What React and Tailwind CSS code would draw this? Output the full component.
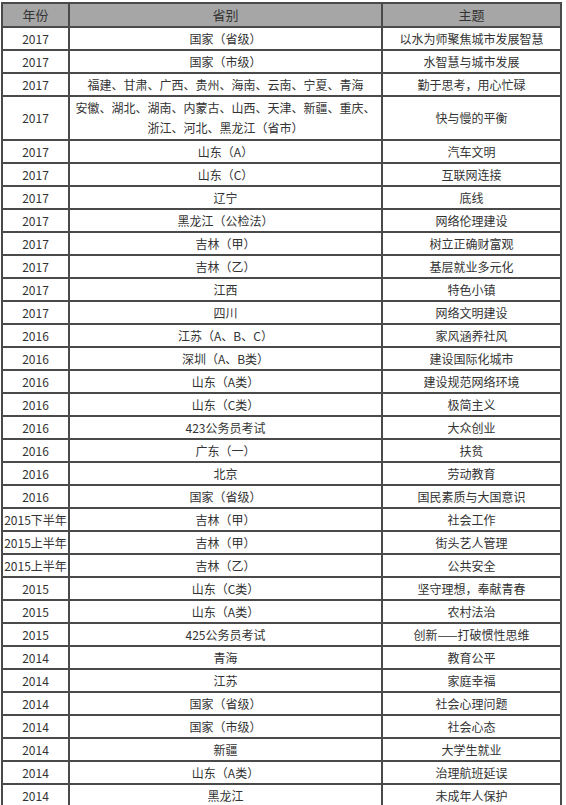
const rows = [
  ['2017', '国家（省级）', '以水为师聚焦城市发展智慧'],
  ['2017', '国家（市级）', '水智慧与城市发展'],
  ['2017', '福建、甘肃、广西、贵州、海南、云南、宁夏、青海', '勤于思考，用心忙碌'],
  ['2017', ['安徽、湖北、湖南、内蒙古、山西、天津、新疆、重庆、', '浙江、河北、黑龙江（省市）'], '快与慢的平衡'],
  ['2017', '山东（A）', '汽车文明'],
  ['2017', '山东（C）', '互联网连接'],
  ['2017', '辽宁', '底线'],
  ['2017', '黑龙江（公检法）', '网络伦理建设'],
  ['2017', '吉林（甲）', '树立正确财富观'],
  ['2017', '吉林（乙）', '基层就业多元化'],
  ['2017', '江西', '特色小镇'],
  ['2017', '四川', '网络文明建设'],
  ['2016', '江苏（A、B、C）', '家风涵养社风'],
  ['2016', '深圳（A、B类）', '建设国际化城市'],
  ['2016', '山东（A类）', '建设规范网络环境'],
  ['2016', '山东（C类）', '极简主义'],
  ['2016', '423公务员考试', '大众创业'],
  ['2016', '广东（一）', '扶贫'],
  ['2016', '北京', '劳动教育'],
  ['2016', '国家（省级）', '国民素质与大国意识'],
  ['2015下半年', '吉林（甲）', '社会工作'],
  ['2015上半年', '吉林（甲）', '街头艺人管理'],
  ['2015上半年', '吉林（乙）', '公共安全'],
  ['2015', '山东（C类）', '坚守理想，奉献青春'],
  ['2015', '山东（A类）', '农村法治'],
  ['2015', '425公务员考试', '创新——打破惯性思维'],
  ['2014', '青海', '教育公平'],
  ['2014', '江苏', '家庭幸福'],
  ['2014', '国家（省级）', '社会心理问题'],
  ['2014', '国家（市级）', '社会心态'],
  ['2014', '新疆', '大学生就业'],
  ['2014', '山东（A类）', '治理航班延误'],
  ['2014', '黑龙江', '未成年人保护'],
];

export default function App() {
  return (
    <div className="w-[566px] h-[805px] overflow-hidden bg-white pt-[2px] pl-[1px] text-[12px] text-[#333]" style={{ fontFamily: '"Noto Sans CJK SC", "Liberation Sans", sans-serif' }}>
      <div className="w-[561px] border-t-2 border-l-2 border-[#4a4a4a]">
        {/* header */}
        <div className="grid grid-cols-[67px_313px_179px] bg-[#a6a6a6] text-[13px] text-[#333]">
          <div className="h-[24px] flex items-center justify-center border-r-2 border-b-2 border-[#4a4a4a]">年份</div>
          <div className="h-[24px] flex items-center justify-center border-r-2 border-b-2 border-[#4a4a4a]">省别</div>
          <div className="h-[24px] flex items-center justify-center border-r-2 border-b-2 border-[#4a4a4a]">主题</div>
        </div>
        {rows.map((r, i) => {
          const multi = Array.isArray(r[1]);
          const h = multi ? 'h-[44px]' : 'h-[23px]';
          return (
            <div key={i} className="grid grid-cols-[67px_313px_179px]">
              <div className={`${h} flex items-center justify-center whitespace-nowrap border-r-2 border-b-2 border-[#4a4a4a]`}>{r[0]}</div>
              <div className={`${h} flex flex-col items-center justify-center whitespace-nowrap leading-[20px] border-r-2 border-b-2 border-[#4a4a4a]`}>
                {multi ? r[1].map((t, j) => <span key={j}>{t}</span>) : r[1]}
              </div>
              <div className={`${h} flex items-center justify-center whitespace-nowrap border-r-2 border-b-2 border-[#4a4a4a]`}>{r[2]}</div>
            </div>
          );
        })}
      </div>
    </div>
  );
}
